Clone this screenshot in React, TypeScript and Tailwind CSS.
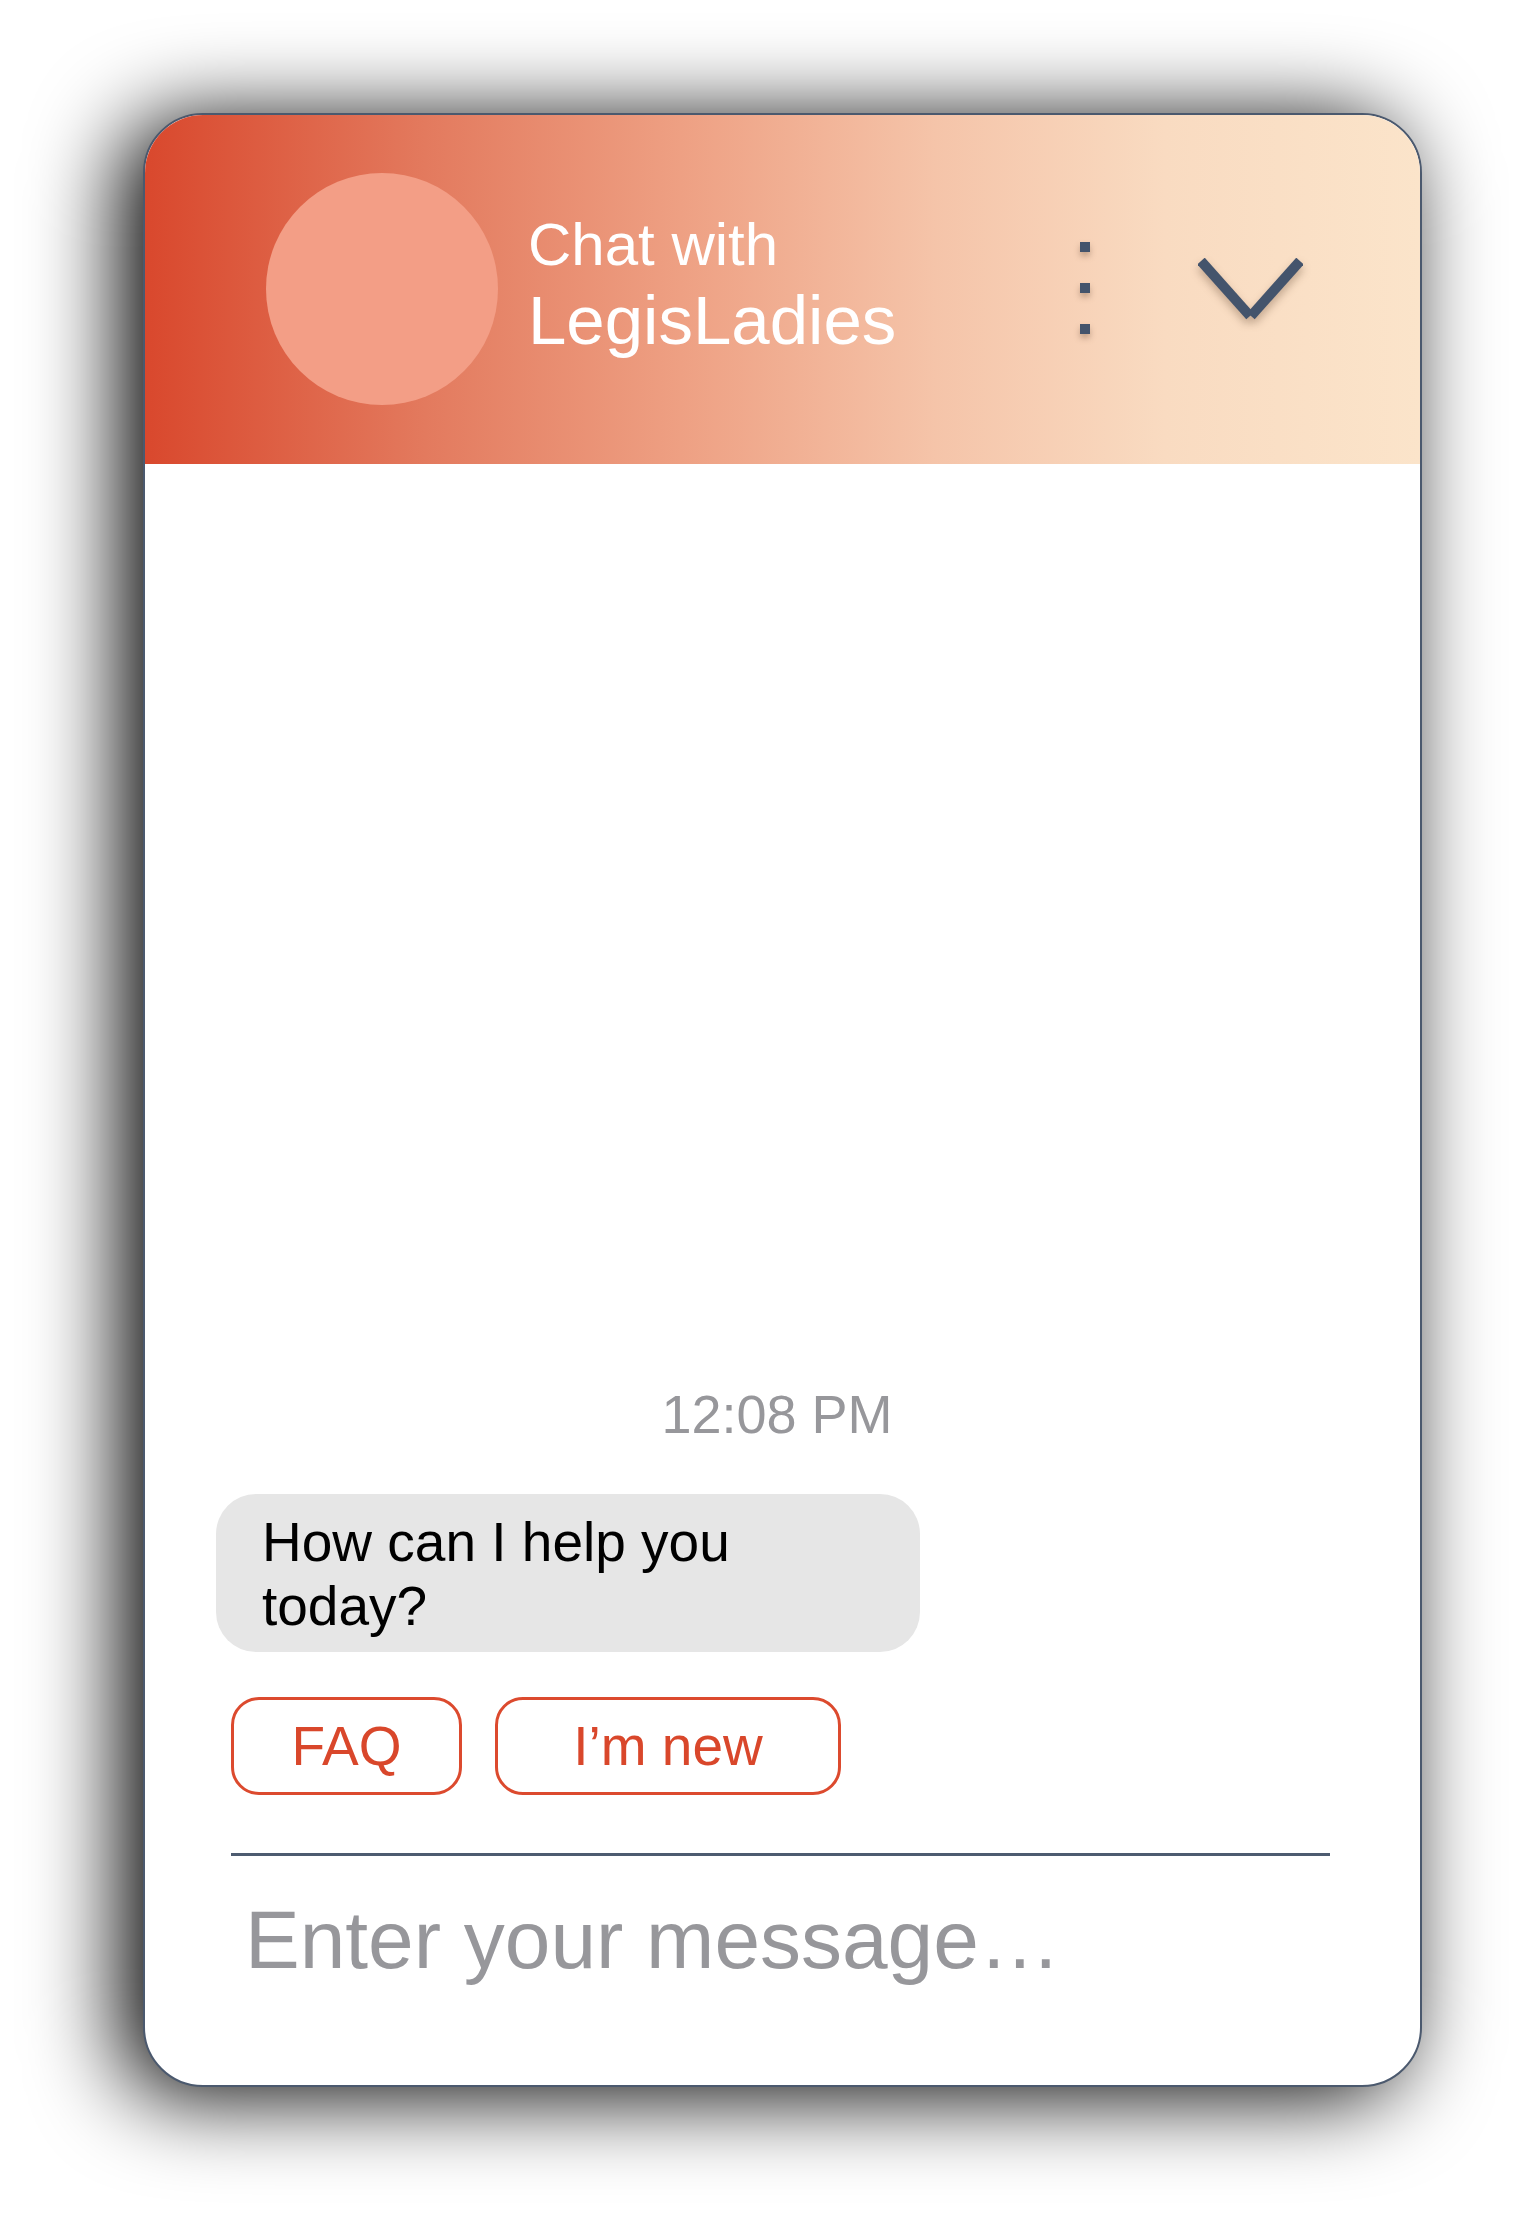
import React from "react";

export default function App() {
  return (
    <div
      className="w-[1526px] h-[2222px] bg-white pt-[113px] pl-[143px]"
      style={{ fontFamily: '"Liberation Sans", Arial, sans-serif' }}
    >
      <div className="w-[1279px] h-[1974px] rounded-[60px] border-2 border-[#4b596e] overflow-hidden flex flex-col bg-white shadow-[-21px_8px_90px_rgba(0,0,0,1)]">
        {/* Header */}
        <div className="h-[349px] shrink-0 flex items-start bg-[linear-gradient(to_right,#d9482d_0%,#e37a5e_22%,#eea083_42%,#f5c4a9_62%,#f9dbc1_80%,#fbe4ca_100%)]">
          <div className="ml-[121px] mt-[58px] w-[232px] h-[232px] rounded-full bg-[#f39e86] shrink-0" />
          <div className="ml-[30px] mt-[95px] flex flex-col text-white">
            <div className="text-[60px] leading-[70px]">Chat with</div>
            <div className="text-[69px] leading-[82px]">LegisLadies</div>
          </div>
          <div className="flex-1" />
          <div className="mt-[127px] flex flex-col gap-[31px] drop-shadow-[0_4px_3px_rgba(90,60,40,0.35)]">
            <div className="w-[10px] h-[10px] bg-[#44546c]" />
            <div className="w-[10px] h-[10px] bg-[#44546c]" />
            <div className="w-[10px] h-[10px] bg-[#44546c]" />
          </div>
          <div className="ml-[108px] mt-[143px] mr-[117px] drop-shadow-[0_5px_4px_rgba(90,60,40,0.35)]">
            <svg width="105" height="62" viewBox="0 0 105 62">
              <line x1="3" y1="3" x2="52" y2="58" stroke="#44546c" strokeWidth="10" />
              <line x1="102" y1="3" x2="53" y2="58" stroke="#44546c" strokeWidth="10" />
            </svg>
          </div>
        </div>

        {/* Body */}
        <div className="flex-1 flex flex-col justify-end pb-[97px]">
          <div className="flex justify-center pr-[11px]">
            <div className="text-[54px] leading-[64px] text-[#97979b]">12:08 PM</div>
          </div>
          <div className="mt-[48px] ml-[71px] w-[704px] rounded-[40px] bg-[#e6e6e6] pl-[46px] pt-[16px] pb-[14px]">
            <div className="w-[560px] text-[55px] leading-[64px] text-black">
              How can I help you today?
            </div>
          </div>
          <div className="mt-[45px] ml-[86px] flex gap-[33px]">
            <div className="w-[231px] h-[98px] rounded-[28px] border-[3px] border-[#dc4a2e] flex items-center justify-center text-[55px] text-[#d9472b]">
              FAQ
            </div>
            <div className="w-[346px] h-[98px] rounded-[28px] border-[3px] border-[#dc4a2e] flex items-center justify-center text-[55px] text-[#d9472b]">
              I’m new
            </div>
          </div>
          <div className="mt-[58px] ml-[86px] w-[1099px] h-[3px] bg-[#4d5b70]" />
          <div className="mt-[36px] ml-[100px] text-[82px] leading-[96px] text-[#97979b]">
            Enter your message…
          </div>
        </div>
      </div>
    </div>
  );
}
